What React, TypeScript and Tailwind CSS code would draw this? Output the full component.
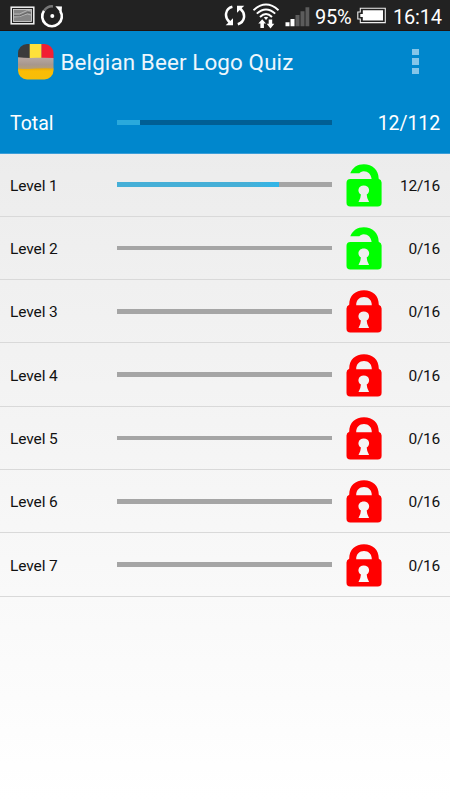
import React from "react";

const levels = [
  { name: "Level 1", done: 12, total: 16, unlocked: true },
  { name: "Level 2", done: 0, total: 16, unlocked: true },
  { name: "Level 3", done: 0, total: 16, unlocked: false },
  { name: "Level 4", done: 0, total: 16, unlocked: false },
  { name: "Level 5", done: 0, total: 16, unlocked: false },
  { name: "Level 6", done: 0, total: 16, unlocked: false },
  { name: "Level 7", done: 0, total: 16, unlocked: false },
];

const KEYHOLE = "M12.5 37.9 Q14.8 34.5 14.9 30.6 C10.6 27.5 12.2 21.4 17.8 21.4 C23.4 21.4 25 27.5 20.7 30.6 Q20.8 34.5 23.1 37.9 Z";

function Lock({ open }: { open: boolean }) {
  return (
    <svg viewBox="0 0 36 43" className="w-9 h-[43px] shrink-0">
      {open ? (
        <path
          fill="#00ff00"
          fillRule="evenodd"
          d={
            "M4.3 9.3 C6.5 3.6 11.5 0.3 17.8 0.3 C26.5 0.3 32.6 6 32.7 14.8 Q35.6 15.8 35.6 18.5 V38.8 Q35.6 42.6 31.8 42.6 H4.3 Q0.5 42.6 0.5 38.8 V18.8 Q0.5 15 4.3 15 H25.6 C25 10.3 22 7.3 17.8 7.3 C15.5 7.3 14.3 8.3 13.4 9.3 Z " +
            KEYHOLE
          }
        />
      ) : (
        <path
          fill="#ff0000"
          fillRule="evenodd"
          d={
            "M3.2 14.8 C3.2 5.6 9.4 0.3 18 0.3 C26.6 0.3 32.8 5.6 32.8 14.8 Q35.6 15.8 35.6 18.5 V38.8 Q35.6 42.6 31.8 42.6 H4.3 Q0.5 42.6 0.5 38.8 V18.5 Q0.5 15.8 3.2 14.8 Z M10.2 15.2 H25.8 C25.8 10 22.6 7 18 7 C13.4 7 10.2 10 10.2 15.2 Z " +
            KEYHOLE
          }
        />
      )}
    </svg>
  );
}

function StatusBar() {
  return (
    <div className="flex items-center h-[31px] shrink-0 bg-[#222222] border-b border-[#20130f] text-white">
      <svg viewBox="0 0 26 20" className="ml-[10px] mt-[2px] w-[26px] h-5">
        <rect x="1.2" y="1.2" width="22.6" height="16.6" fill="#222" stroke="#f4f4f4" strokeWidth="1.5" />
        <rect x="3.5" y="3.5" width="18" height="12" fill="#858585" />
        <path d="M4 8 Q10 9 14 6 T21 5 M4 11 Q11 11 14 9 T21 9" fill="none" stroke="#b5b5b5" strokeWidth="1" />
        <path d="M4 9.5 Q10 11 14 8 T21 7" fill="none" stroke="#5a5a5a" strokeWidth="0.8" />
        <rect x="3.5" y="3.5" width="18" height="12" fill="none" stroke="#ddd" strokeWidth="0.8" />
      </svg>
      <svg viewBox="0 0 24 24" className="ml-[4px] mt-[2px] w-6 h-6">
        <path d="M4.3 6.5 A9.6 9.6 0 0 1 13 2.4" fill="none" stroke="#777" strokeWidth="2.5" />
        <path d="M20.2 7 A9.8 9.8 0 1 1 4 6.8" fill="none" stroke="#fff" strokeWidth="2.6" />
        <path d="M15.4 2.2 L22 2.6 L21.4 9.4 Z" fill="#fff" />
        <circle cx="12.3" cy="12" r="2" fill="#fff" />
      </svg>
      <svg viewBox="0 0 22 24" className="ml-[159.5px] mt-[2px] w-[22px] h-6">
        <path d="M8.4 2.8 C1 4.8 0 13.2 5.6 18.2 M13.8 20.2 C21.2 18 22 9.8 16.4 4.8" fill="none" stroke="#fff" strokeWidth="2.5" />
        <path d="M1.7 21.3 H9 V14.2 Z M20.3 1.7 H13 V8.8 Z" fill="#fff" />
      </svg>
      <svg viewBox="0 0 28 27" className="ml-[6px] w-7 h-[27px]">
        <g fill="none" stroke="#fff" strokeWidth="1.9">
          <path d="M1.5 8.2 Q14 -3 26.5 8.2" />
          <path d="M4.8 11.6 Q14 3.2 23.2 11.6" />
          <path d="M8 15 Q14 9.2 20 15" />
        </g>
        <path d="M11.8 15.6 Q14 13.7 16.2 15.6 L14 18 Z" fill="#fff" />
        <path d="M10.2 17.3 L14 21.5 H11.9 V26 H8.4 V21.5 H6.3 Z" fill="#fff" />
        <path d="M16.7 17.5 H20.2 V21.8 H22.3 L18.5 26.5 L14.7 21.8 H16.7 Z" fill="#fff" />
      </svg>
      <svg viewBox="0 0 25 22" className="ml-[5px] mt-[2px] w-[25px] h-[22px]">
        <path d="M0.5 17.3 h4 v4 h-4z M5.5 14 h4 v7.3 h-4z" fill="#fff" />
        <path d="M10.5 10 h4 v11.3 h-4z M15.5 6.3 h4 v15 h-4z M20.5 2.2 h3.8 v19.1 h-3.8z" fill="#5c5c5c" />
      </svg>
      <span className="ml-[5.5px] w-[37px] text-[20px] leading-[30px] whitespace-nowrap pt-[3px] tracking-[-0.3px]">95%</span>
      <svg viewBox="0 0 30 17" className="ml-[5px] mt-px w-[30px] h-[17px]">
        <path d="M3.3 1.2 H28.3 V15.6 H3.3 V12 H0.8 V5 H3.3 Z" fill="#222" stroke="#eee" strokeWidth="1.1" />
        <path d="M5.8 3.2 H26 V13.6 H5.8 V10 H3.3 V7 H5.8 Z" fill="#fff" />
      </svg>
      <span className="ml-[6px] text-[20px] leading-[30px] whitespace-nowrap pt-[3px] tracking-[-0.2px]">16:14</span>
    </div>
  );
}

function AppIcon() {
  return (
    <svg viewBox="0 0 36 36" className="w-9 h-9 shrink-0">
      <defs>
        <clipPath id="icon-clip">
          <rect width="35.5" height="35.5" rx="9" />
        </clipPath>
        <linearGradient id="foam" x1="0" y1="0" x2="0" y2="1">
          <stop offset="0" stopColor="#b9a9a2" />
          <stop offset="0.6" stopColor="#a7978d" />
          <stop offset="1" stopColor="#b7a06e" />
        </linearGradient>
        <linearGradient id="beer" x1="0" y1="0" x2="0" y2="1">
          <stop offset="0" stopColor="#e4a60c" />
          <stop offset="0.25" stopColor="#fabd05" />
          <stop offset="1" stopColor="#f6bd0a" />
        </linearGradient>
      </defs>
      <g clipPath="url(#icon-clip)">
        <rect width="12" height="15" fill="#3b3b3b" />
        <rect x="11.7" width="12" height="15" fill="#ffe13a" />
        <rect x="23.5" width="12.5" height="15" fill="#f21f32" />
        <path d="M0 13.2 Q8 14.2 18 13.8 T36 14 V25.6 H0 Z" fill="url(#foam)" />
        <path d="M0 24.4 Q10 25.4 18 24.6 T36 24.4 V36 H0 Z" fill="url(#beer)" />
      </g>
    </svg>
  );
}

export default function App() {
  const done = levels.reduce((sum, l) => sum + l.done, 0);
  const total = levels.reduce((sum, l) => sum + l.total, 0);

  return (
    <div className="w-[450px] h-[800px] flex flex-col overflow-hidden bg-linear-to-b from-[#e8e8e8] via-[#f8f8f8] via-70% to-white font-[Roboto,sans-serif] text-[#111111]">
      <StatusBar />

      <header className="h-[122.5px] shrink-0 flex flex-col bg-[#0087cd] border-b border-[#3b9ed8] text-white">
        <div className="h-[61px] flex items-center pl-[17.5px] pr-[31px]">
          <AppIcon />
          <h1 className="ml-[7px] text-[22.4px] leading-[30px] tracking-[0.12px] text-[#eef6fc] whitespace-nowrap">Belgian Beer Logo Quiz</h1>
          <button aria-label="Menu" className="ml-auto flex flex-col gap-[3px]">
            <span className="w-[7px] h-[6.5px] bg-[#85c5e8]" />
            <span className="w-[7px] h-[6.5px] bg-[#85c5e8]" />
            <span className="w-[7px] h-[6.5px] bg-[#85c5e8]" />
          </button>
        </div>
        <div className="flex-1 flex items-center px-[10px]">
          <span className="w-[107.4px] pt-[2px] text-[19.5px]">Total</span>
          <div className="w-[215px] h-[4.5px] bg-[#005f94]">
            <div className="h-full bg-[#2aa9dc]" style={{ width: `${(done / total) * 100}%` }} />
          </div>
          <span className="ml-auto pt-[2px] text-[19.5px] tracking-[-0.1px]">{done}/{total}</span>
        </div>
      </header>

      <ul className="flex flex-col">
        {levels.map((level) => (
          <li key={level.name} className="h-[63.33px] flex items-center px-[10px] border-b border-[#d9d9d9]">
            <span className="w-[107.4px] pt-[3px] text-[15.5px] tracking-[-0.1px]">{level.name}</span>
            <div className="w-[215px] h-[4.5px] bg-[#a5a5a5]">
              <div className="h-full bg-linear-to-r from-[#45afd7] from-80% to-[#2fb5e8]" style={{ width: `${(level.done / level.total) * 100}%` }} />
            </div>
            <div className="ml-[13.5px] pt-px">
              <Lock open={level.unlocked} />
            </div>
            <span className="ml-auto pt-[3px] text-[15.5px] tracking-[-0.25px]">{level.done}/{level.total}</span>
          </li>
        ))}
      </ul>
    </div>
  );
}
